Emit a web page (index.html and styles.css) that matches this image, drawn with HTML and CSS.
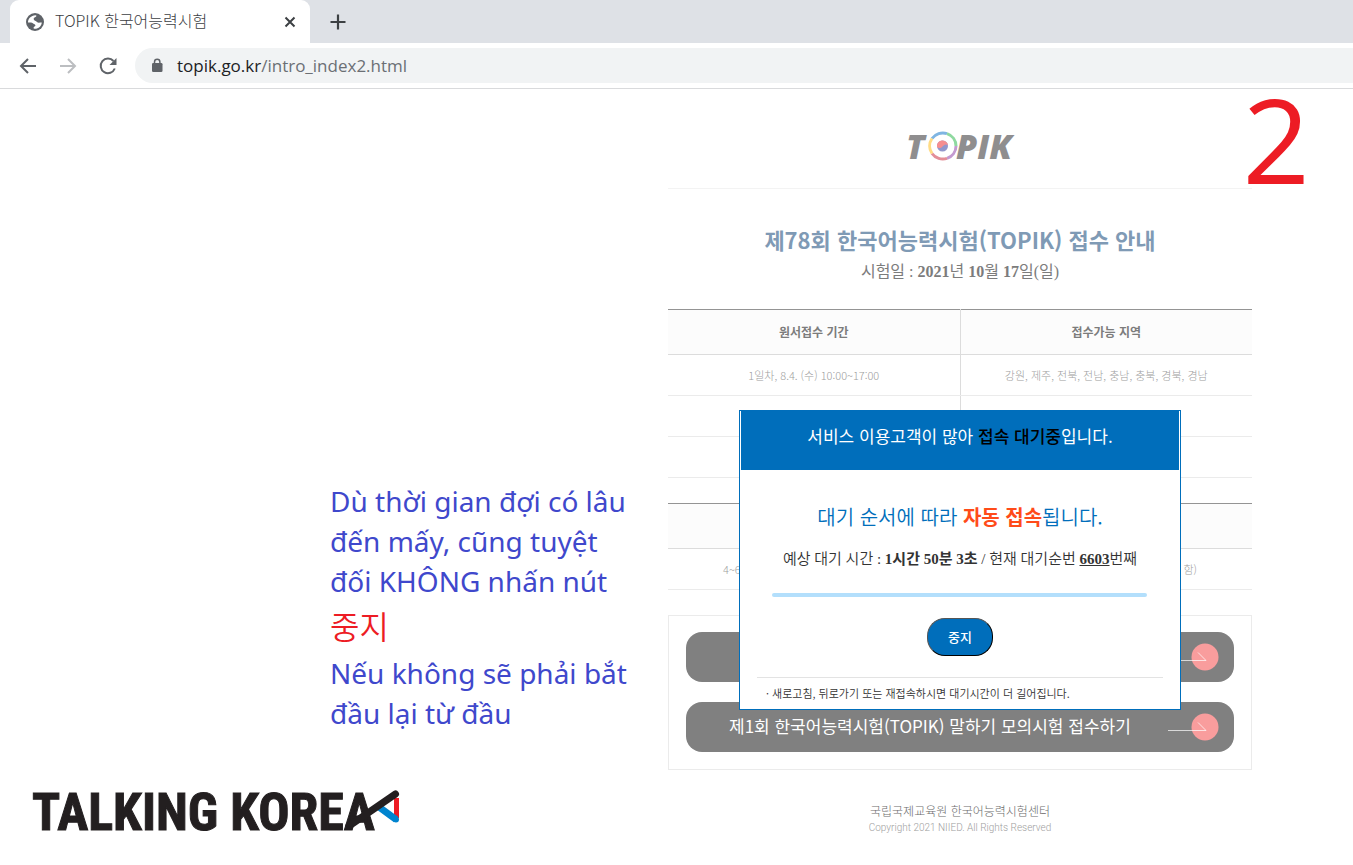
FILE: index.html
```html
<!DOCTYPE html>
<html lang="ko">
<head>
<meta charset="utf-8">
<title>TOPIK 한국어능력시험</title>
<link rel="stylesheet" href="styles.css">
</head>
<body>
<header class="browser">
  <div class="tabs">
    <div class="tab">
      <svg class="globe" viewBox="0 0 18 18" width="18" height="18" aria-hidden="true"><circle cx="9" cy="9" r="9" fill="#5f6368"/><path d="M2 9.500C2 5.500 5 2.500 9.500 2.200C11 2.200 10.500 3.500 9.500 4C8 4.500 7.500 5 7.800 6.500C8 8 10 7.800 11 9C11.800 10 13.500 9.500 15.800 9.500C15.500 13 12.500 16 8.500 15.800C7 15.500 7.500 14 8.500 13.500C10 13 9.500 11.500 8 11C6.500 10.500 6.500 9.500 5 9.500Z" fill="#fff"/></svg>
      <span class="tab-title">TOPIK 한국어능력시험</span>
      <button class="icon-btn" aria-label="Close tab"><svg viewBox="0 0 12 12" width="12" height="12"><path d="M1.500 1.500l9 9M10.500 1.500l-9 9" stroke="#3c4043" stroke-width="2" fill="none"/></svg></button>
    </div>
    <button class="icon-btn new-tab" aria-label="New tab"><svg viewBox="0 0 16 16" width="16" height="16"><path d="M8 0.500v15M.5 8h15" stroke="#3c4043" stroke-width="2.200" fill="none"/></svg></button>
  </div>
  <nav class="toolbar">
    <button class="icon-btn" aria-label="Back"><svg viewBox="0 0 18 16" width="18" height="16"><path d="M17 8H2M9 1L2 8l7 7" stroke="#5f6368" stroke-width="2" fill="none"/></svg></button>
    <button class="icon-btn" aria-label="Forward"><svg viewBox="0 0 18 16" width="18" height="16"><path d="M1 8h15M9 1l7 7-7 7" stroke="#bcbec1" stroke-width="2" fill="none"/></svg></button>
    <button class="icon-btn" aria-label="Reload"><svg viewBox="0 0 18 18" width="18" height="18"><path d="M14.500 4A7.300 7.300 0 1 0 15.800 11.500" stroke="#5f6368" stroke-width="2" fill="none"/><path d="M17.500 1v7h-7z" fill="#5f6368"/></svg></button>
    <div class="address">
      <svg viewBox="0 0 12 15" width="12" height="15" aria-hidden="true"><rect x="1" y="5" width="10.500" height="9" rx="1.300" fill="#5f6368"/><path d="M3.500 6V4a2.700 2.700 0 0 1 5.400 0v2" stroke="#5f6368" stroke-width="1.500" fill="none"/></svg>
      <a class="url" href="#">topik.go.kr<span>/intro_index2.html</span></a>
    </div>
  </nav>
</header>

<main class="page">
  <aside class="side">
    <div class="note">
      <p>Dù thời gian đợi có lâu đến mấy, cũng tuyệt đối KHÔNG nhấn nút</p>
      <p class="stop">중지</p>
      <p>Nếu không sẽ phải bắt đầu lại từ đầu</p>
    </div>
    <svg class="brand" viewBox="0 0 370 44" width="370" height="44" role="img" aria-label="Talking Korea">
      <text class="brand-text" x="0" y="40">TALKING KOREA</text>
      <path d="M364.500 8V28" stroke="#ed1c24" stroke-width="5"/>
      <path d="M347 17L364 29.500" stroke="#0084cf" stroke-width="7"/>
      <circle cx="364" cy="29.500" r="3" fill="#0084cf"/>
      <path d="M317 36L363.500 4" stroke="#231f20" stroke-width="7" stroke-linecap="round"/>
    </svg>
  </aside>

  <section class="panel">
    <header class="panel-head">
      <svg class="logo" viewBox="0 0 108 32" width="108" height="32" role="img" aria-label="TOPIK">
        <text class="logo-text" x="0" y="29">T</text>
        <text class="logo-text" x="50" y="29">PIK</text>
        <g fill="none" stroke-width="3">
          <path d="M26 8.500A13.200 13.200 0 0 1 41 3.600" stroke="#7fb5e2"/>
          <path d="M41 3.600A13.200 13.200 0 0 1 50 16" stroke="#8fd9a0"/>
          <path d="M50 16A13.200 13.200 0 0 1 41 28.400" stroke="#c49ad0"/>
          <path d="M41 28.400A13.200 13.200 0 0 1 26 23.500" stroke="#e38e98"/>
          <path d="M26 23.500A13.200 13.200 0 0 1 26 8.500" stroke="#ffdc85"/>
        </g>
        <circle cx="36.500" cy="16" r="5.500" fill="#9297cc"/>
        <path d="M31 17A5.500 5.500 0 1 1 42 15C39 13.500 38 15 36.500 16.500S33 19 31 17Z" fill="#f68e90"/>
      </svg>
    </header>

    <h1>제78회 한국어능력시험(TOPIK) 접수 안내</h1>
    <p class="date">시험일 : <b>2021</b>년 <b>10</b>월 <b>17</b>일(일)</p>

    <table class="schedule">
      <thead><tr><th>원서접수 기간</th><th>접수가능 지역</th></tr></thead>
      <tbody>
        <tr><td>1일차, 8.4. (수) 10:00~17:00</td><td>강원, 제주, 전북, 전남, 충남, 충북, 경북, 경남</td></tr>
        <tr><td></td><td></td></tr>
        <tr><td></td><td></td></tr>
      </tbody>
    </table>

    <table class="schedule">
      <thead><tr><th></th></tr></thead>
      <tbody><tr><td><div class="ends"><span>4~6</span><span>함)</span></div></td></tr></tbody>
    </table>

    <div class="links">
      <a class="apply" href="#"><span></span>
        <svg viewBox="0 0 52 28" width="52" height="28" aria-hidden="true"><circle cx="37" cy="14" r="13.500" fill="#f99d9d"/><path d="M0 17.500H38L30 9.500" stroke="#fff" stroke-opacity=".7" fill="none"/></svg></a>
      <a class="apply" href="#"><span>제1회 한국어능력시험(TOPIK) 말하기 모의시험 접수하기</span>
        <svg viewBox="0 0 52 28" width="52" height="28" aria-hidden="true"><circle cx="37" cy="14" r="13.500" fill="#f99d9d"/><path d="M0 17.500H38L30 9.500" stroke="#fff" stroke-opacity=".7" fill="none"/></svg></a>
    </div>

    <footer class="foot">
      <p>국립국제교육원 한국어능력시험센터</p>
      <p class="copy">Copyright 2021 NIIED. All Rights Reserved</p>
    </footer>

    <div class="queue" role="dialog" aria-labelledby="queue-title">
      <h2 id="queue-title">서비스 이용고객이 많아 <b>접속 대기중</b>입니다.</h2>
      <p class="lead">대기 순서에 따라 <b>자동 접속</b>됩니다.</p>
      <p class="wait">예상 대기 시간 : <b>1시간 50분 3초</b> / 현재 대기순번 <b><u>6603</u></b>번째</p>
      <div class="bar"></div>
      <button class="stop-btn">중지</button>
      <p class="hint">· 새로고침, 뒤로가기 또는 재접속하시면 대기시간이 더 길어집니다.</p>
    </div>
  </section>

  <div class="step">2</div>
</main>
</body>
</html>
```
FILE: styles.css
```css
* { box-sizing: border-box; }
body { margin: 0; background: #fff; font-family: "Noto Sans CJK KR", sans-serif; }
h1, h2, p { margin: 0; }
a { color: inherit; text-decoration: none; }
svg { display: block; flex: none; }

.icon-btn { border: 0; padding: 0; background: none; }

.tabs { display: flex; align-items: center; height: 43px; padding-left: 10px; background: #dee1e6; }
.tab { display: flex; align-items: center; width: 300px; height: 43px; padding: 0 14px 0 16px; background: #fff; border-radius: 9px 9px 0 0; }
.tab-title { flex: 1; margin-left: 11px; padding-bottom: 3px; font-size: 16px; font-weight: 300; line-height: 20px; color: #3c4043; }
.new-tab { margin-left: 20px; }

.toolbar { display: flex; align-items: center; gap: 22px; height: 46px; padding-left: 19px; border-bottom: 1px solid #d9dadc; }
.address { flex: 1; display: flex; align-items: center; gap: 14px; height: 35px; margin-left: -4px; padding-left: 16px; background: #f1f3f4; border-radius: 18px 0 0 18px; }
.url { font-family: "Open Sans", sans-serif; font-size: 17px; line-height: 24px; color: #202124; }
.url span { color: #6b6f74; }

.page { position: relative; display: grid; grid-template-columns: 1fr 584px; gap: 36px; padding: 0 101px 14px 32px; }

.side { display: flex; flex-direction: column; justify-content: space-between; padding: 392px 0 1px; }
.note { align-self: flex-end; width: 302px; font-family: "Noto Sans", "Noto Sans CJK KR", sans-serif; font-size: 28px; line-height: 40px; color: #3f48cc; }
.note .stop { padding: 6px 0; font-size: 32px; font-weight: 350; color: #ed1c24; }
.brand { overflow: visible; }
.brand-text { font: bold 52px "Liberation Sans Narrow", "Roboto Condensed", sans-serif; fill: #231f20; stroke: #231f20; stroke-width: 1px; }

.panel { position: relative; text-align: center; }
.panel-head { display: flex; justify-content: center; padding: 41px 0 26px; border-bottom: 1px solid #f3f3f3; }
.logo { overflow: visible; }
.logo-text { font: italic 800 34px "Open Sans", sans-serif; fill: #8f8e8f; }

h1 { padding-top: 33px; font-size: 22px; line-height: 34px; font-weight: 700; color: #7f9ab5; }
.date { margin: 2px 0 23px; font-family: "Liberation Serif", "Noto Sans CJK KR", serif; font-size: 16px; line-height: 28px; color: #7c7c7c; }

.schedule { width: 100%; margin-bottom: 25px; border-collapse: collapse; table-layout: fixed; border-top: 1px solid #949494; font-size: 11px; line-height: 20px; }
.schedule th { height: 45px; padding: 0; background: #fcfcfc; border-bottom: 1px solid #dcdcdc; font-size: 12px; color: #7c7c7c; }
.schedule td { height: 41px; padding: 0; border-bottom: 1px solid #ebebeb; font-weight: 300; color: #a0a0a0; }
.schedule th + th, .schedule td + td { border-left: 1px solid #dcdcdc; }
.ends { display: flex; justify-content: space-between; padding: 0 55px; }

.links { display: grid; gap: 20px; padding: 16px 17px 17px; border: 1px solid #ebebeb; }
.apply { display: flex; align-items: center; justify-content: space-between; height: 50px; padding: 0 14px 0 43px; border-radius: 16px; background: #808080; color: #fff; font-size: 17px; line-height: 24px; }
.apply span { padding-bottom: 2px; }

.foot { padding-top: 31px; font-size: 12px; line-height: 20px; color: #6c6c6c; font-weight: 300; }
.copy { font-family: Roboto, sans-serif; font-size: 10px; line-height: 14px; color: #a0a0a0; }

.queue { position: absolute; top: 321px; left: 0; right: 0; width: 442px; margin: 0 auto; padding: 0 1px; border: 1px solid #006ebb; background: #fff; color: #333; }
.queue h2 { padding: 11px 0 20px; background: #006ebb; color: #fff; font-size: 17px; line-height: 28px; font-weight: 400; }
.queue h2 b { color: #000; font-weight: 500; }
.lead { padding-top: 32px; font-size: 20px; line-height: 30px; font-weight: 350; color: #006ebb; }
.lead b { font-weight: 700; color: #ff4b19; }
.wait { padding: 12px 0 19px; font-family: "Liberation Serif", "Noto Sans CJK KR", serif; font-size: 15px; line-height: 30px; font-weight: 350; }
.wait b { font-weight: 700; }
.bar { height: 4px; margin: 0 32px 21px 31px; border-radius: 2px; background: #b3dffc; }
.stop-btn { width: 66px; height: 38px; padding: 0 0 2px; border: 1px outset #555; border-radius: 18px; background: #006ebb; color: #fff; font: 500 13px "Noto Sans CJK KR", sans-serif; }
.hint { margin: 21px 16px 0; padding: 5px 9px 6px; border-top: 1px solid #e3e3e3; font-size: 11px; line-height: 20px; text-align: left; font-weight: 350; }

.step { position: absolute; top: -13px; right: 43px; font: 118px/126px "Open Sans", sans-serif; color: #ed1c24; }
```
